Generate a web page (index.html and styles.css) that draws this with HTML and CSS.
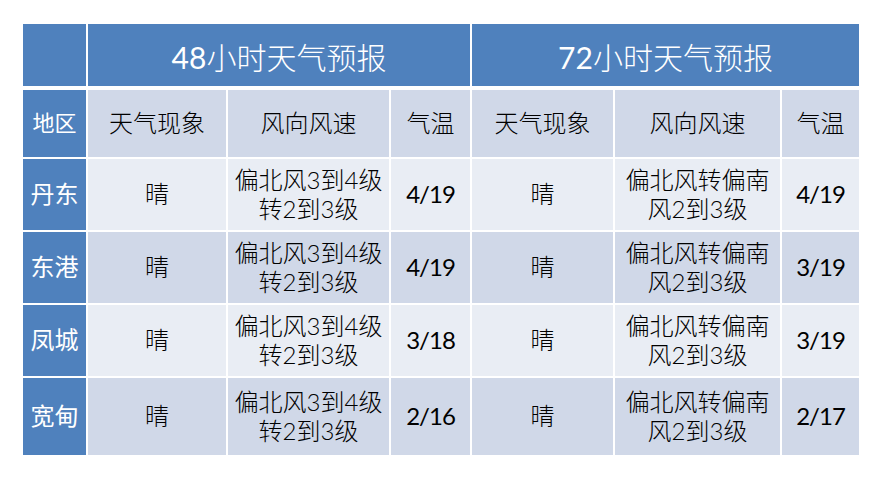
FILE: index.html
```html
<!DOCTYPE html>
<html lang="zh-CN">
<head>
<meta charset="utf-8">
<title>天气预报</title>
<link rel="stylesheet" href="styles.css">
</head>
<body>
<div class="forecast">
  <div class="cell blue head-top"></div>
  <div class="cell blue head-top title span3"><span class="num">48</span>小时天气预报</div>
  <div class="cell blue head-top title span3"><span class="num">72</span>小时天气预报</div>

  <div class="cell blue label small">地区</div>
  <div class="cell mid">天气现象</div>
  <div class="cell mid">风向风速</div>
  <div class="cell mid">气温</div>
  <div class="cell mid">天气现象</div>
  <div class="cell mid">风向风速</div>
  <div class="cell mid">气温</div>

  <div class="cell blue label">丹东</div>
  <div class="cell light">晴</div>
  <div class="cell light">偏北风3到4级<br>转2到3级</div>
  <div class="cell light temp">4/19</div>
  <div class="cell light">晴</div>
  <div class="cell light">偏北风转偏南<br>风2到3级</div>
  <div class="cell light temp">4/19</div>

  <div class="cell blue label">东港</div>
  <div class="cell mid">晴</div>
  <div class="cell mid">偏北风3到4级<br>转2到3级</div>
  <div class="cell mid temp">4/19</div>
  <div class="cell mid">晴</div>
  <div class="cell mid">偏北风转偏南<br>风2到3级</div>
  <div class="cell mid temp">3/19</div>

  <div class="cell blue label">凤城</div>
  <div class="cell light">晴</div>
  <div class="cell light">偏北风3到4级<br>转2到3级</div>
  <div class="cell light temp">3/18</div>
  <div class="cell light">晴</div>
  <div class="cell light">偏北风转偏南<br>风2到3级</div>
  <div class="cell light temp">3/19</div>

  <div class="cell blue label">宽甸</div>
  <div class="cell mid">晴</div>
  <div class="cell mid">偏北风3到4级<br>转2到3级</div>
  <div class="cell mid temp">2/16</div>
  <div class="cell mid">晴</div>
  <div class="cell mid">偏北风转偏南<br>风2到3级</div>
  <div class="cell mid temp">2/17</div>
</div>
</body>
</html>
```
FILE: styles.css
```css
html, body {
  margin: 0;
  padding: 0;
  background: #ffffff;
}

body {
  padding: 24px 0 0 23px;
}

.forecast {
  display: grid;
  width: 836px;
  grid-template-columns: 63px 138px 161px 79px 141px 165px 77px;
  grid-template-rows: 64px 67px 71px 71px 71px 77px;
  column-gap: 2px;
  row-gap: 2px;
  background: #ffffff;
  font-family: "Lato", "Noto Sans CJK SC", sans-serif;
  font-size: 24px;
  line-height: 1.2;
  color: #000000;
}

.cell {
  display: flex;
  align-items: center;
  justify-content: center;
  text-align: center;
}

.head-top {
  margin-bottom: 2px;
}

.span3 {
  grid-column: span 3;
}

.title {
  font-size: 30px;
  font-weight: 300;
  padding-top: 4px;
}

.num {
  font-weight: 400;
}

.blue {
  background: #4f81bd;
  color: #ffffff;
}

.mid,
.light {
  font-weight: 300;
}

.mid {
  background: #d0d8e8;
}

.light {
  background: #e9edf4;
}

.temp {
  font-weight: 400;
  letter-spacing: -1px;
}

.label {
  font-size: 24px;
}

.label.small {
  font-size: 22px;
}
```
